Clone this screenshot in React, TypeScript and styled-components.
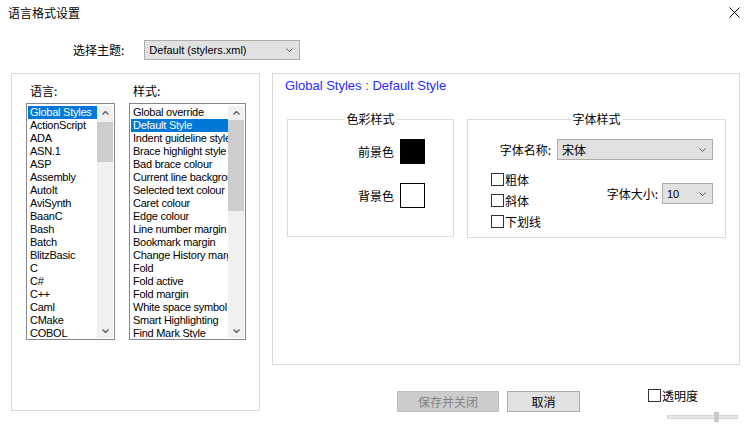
import React from 'react';
import styled, { createGlobalStyle } from 'styled-components';

const GlobalStyle = createGlobalStyle`
  html, body { margin: 0; padding: 0; background: #fff; }
  body {
    font-family: "Liberation Sans", "Noto Sans CJK SC", sans-serif;
    font-size: 12px;
    color: #000;
  }
  * { box-sizing: border-box; }
`;

const Window = styled.div`
  width: 750px;
  height: 427px;
  background: #fff;
  display: flex;
  flex-direction: column;
  overflow: hidden;
`;

const TitleBar = styled.div`
  height: 25px;
  display: flex;
  align-items: center;
  justify-content: space-between;
  padding: 0 10px 0 8px;
`;

const Title = styled.span`
  font-family: "Noto Sans CJK SC", sans-serif;
  font-size: 12px;
  line-height: 14px;
`;

const ThemeRow = styled.div`
  margin-top: 15px;
  height: 20px;
  display: flex;
  align-items: center;
  padding-left: 73px;
  gap: 20px;
`;

const CjkLabel = styled.span`
  font-family: "Noto Sans CJK SC", sans-serif;
  font-size: 12px;
  line-height: 16px;
  white-space: nowrap;
`;

const Select = styled.div<{ $w: number; $h: number }>`
  width: ${p => p.$w}px;
  height: ${p => p.$h}px;
  background: #e1e1e1;
  border: 1px solid #adadad;
  display: flex;
  align-items: center;
  justify-content: space-between;
  padding: 0 6px 0 4px;
  font-size: 11px;
  white-space: nowrap;
`;

const SelectText = styled.span<{ $cjk?: boolean }>`
  font-family: ${p => (p.$cjk ? '"Noto Sans CJK SC", sans-serif' : '"Liberation Sans", sans-serif')};
  font-size: ${p => (p.$cjk ? 12 : 11)}px;
`;

const Main = styled.div`
  margin-top: 13px;
  display: flex;
  padding-left: 11px;
  gap: 12px;
`;

const LeftPanel = styled.div`
  width: 249px;
  height: 338px;
  border: 1px solid #dadada;
  padding: 9px 0 0 14px;
  display: flex;
  gap: 14px;
`;

const ListColumn = styled.div`
  display: flex;
  flex-direction: column;
`;

const ListLabel = styled.div`
  height: 20px;
  padding-left: 4px;
  font-family: "Noto Sans CJK SC", sans-serif;
  font-size: 12px;
  line-height: 16px;
`;

const ListBox = styled.div<{ $w: number }>`
  width: ${p => p.$w}px;
  height: 237px;
  border: 1px solid #828790;
  padding: 2px 1px 1px 1px;
  display: flex;
  background: #fff;
`;

const Items = styled.div`
  flex: 1;
  min-width: 0;
  overflow: hidden;
`;

const Item = styled.div<{ $sel?: boolean }>`
  height: 13px;
  line-height: 13px;
  padding-left: 2px;
  font-size: 11px;
  letter-spacing: -0.25px;
  white-space: nowrap;
  overflow: hidden;
  background: ${p => (p.$sel ? '#0078d7' : 'transparent')};
  color: ${p => (p.$sel ? '#fff' : '#000')};
`;

const ScrollBar = styled.div`
  width: 16px;
  background: #f0f0f0;
  display: flex;
  flex-direction: column;
`;

const ScrollArrow = styled.div`
  height: 14px;
  display: flex;
  align-items: center;
  justify-content: center;
`;

const ScrollTrack = styled.div`
  flex: 1;
  display: flex;
  flex-direction: column;
`;

const Thumb = styled.div<{ $top: number; $h: number }>`
  margin-top: ${p => p.$top}px;
  height: ${p => p.$h}px;
  background: #cdcdcd;
`;

const RightColumn = styled.div`
  width: 468px;
  display: flex;
  flex-direction: column;
`;

const RightPanel = styled.div`
  height: 292px;
  border: 1px solid #dadada;
  display: flex;
  flex-direction: column;
`;

const Header = styled.div`
  margin-top: 3px;
  padding-left: 12px;
  height: 18px;
  line-height: 18px;
  font-size: 13px;
  color: #2a2aff;
`;

const Groups = styled.div`
  margin-top: 24px;
  padding-left: 14px;
  display: flex;
  gap: 13px;
`;

const GroupBox = styled.div<{ $w: number; $h: number }>`
  position: relative;
  width: ${p => p.$w}px;
  height: ${p => p.$h}px;
  border: 1px solid #dcdcdc;
  padding-top: 19px;
`;

const Legend = styled.span`
  position: absolute;
  top: -8px;
  left: 50%;
  transform: translateX(-50%);
  background: #fff;
  padding: 0 2px;
  font-family: "Noto Sans CJK SC", sans-serif;
  font-size: 12px;
  line-height: 14px;
  white-space: nowrap;
`;

const ColorRows = styled.div`
  display: flex;
  flex-direction: column;
  gap: 19px;
  padding-right: 28px;
`;

const ColorRow = styled.div`
  display: flex;
  justify-content: flex-end;
  align-items: center;
  gap: 6px;
`;

const Swatch = styled.div<{ $c: string }>`
  width: 25px;
  height: 25px;
  background: ${p => p.$c};
  border: 1px solid #000;
`;

const FontRow = styled.div`
  display: flex;
  justify-content: flex-end;
  align-items: center;
  gap: 6px;
  padding-right: 12px;
`;

const FontRow2 = styled.div`
  margin-top: 13px;
  display: flex;
  justify-content: space-between;
  padding: 0 12px 0 23px;
`;

const Checks = styled.div`
  display: flex;
  flex-direction: column;
  gap: 8px;
`;

const CheckRow = styled.label`
  display: flex;
  align-items: center;
  gap: 1px;
  height: 13px;
  font-family: "Noto Sans CJK SC", sans-serif;
  font-size: 12px;
  white-space: nowrap;
`;

const CheckBox = styled.span`
  display: inline-block;
  width: 13px;
  height: 13px;
  border: 1px solid #333;
  background: #fff;
`;

const SizeGroup = styled.div`
  margin-top: 10px;
  display: flex;
  align-items: center;
  gap: 4px;
  align-self: flex-start;
`;

const Bottom = styled.div`
  padding-top: 26px;
  display: flex;
`;

const Buttons = styled.div`
  margin-left: 125px;
  display: flex;
  gap: 8px;
`;

const Button = styled.div<{ $w: number; $disabled?: boolean }>`
  width: ${p => p.$w}px;
  height: 21px;
  display: flex;
  align-items: center;
  justify-content: center;
  font-family: "Noto Sans CJK SC", sans-serif;
  font-size: 12px;
  background: ${p => (p.$disabled ? '#cccccc' : '#e1e1e1')};
  border: 1px solid ${p => (p.$disabled ? '#bfbfbf' : '#adadad')};
  color: ${p => (p.$disabled ? '#838383' : '#000')};
`;

const Transparency = styled.div`
  margin-left: 68px;
  margin-top: -2px;
  display: flex;
  flex-direction: column;
`;

const Slider = styled.div`
  position: relative;
  margin: 10px 0 0 19px;
  width: 71px;
  height: 10px;
  display: flex;
  align-items: center;
`;

const SliderTrack = styled.div`
  width: 100%;
  height: 4px;
  background: #e7e7e7;
  border: 1px solid #d6d6d6;
`;

const SliderThumb = styled.div`
  position: absolute;
  left: 47px;
  top: 0;
  width: 5px;
  height: 10px;
  background: #c8c8c8;
`;

const Chevron = ({ up }: { up?: boolean }) => (
  <svg width="7" height="4" viewBox="0 0 7 4">
    <polyline
      points={up ? '0.5,3.5 3.5,0.5 6.5,3.5' : '0.5,0.5 3.5,3.5 6.5,0.5'}
      fill="none"
      stroke="#606060"
      strokeWidth="1.4"
    />
  </svg>
);

const DropChevron = () => (
  <svg width="7" height="4" viewBox="0 0 7 4">
    <polyline points="0.5,0.5 3.5,3.5 6.5,0.5" fill="none" stroke="#555" strokeWidth="1" />
  </svg>
);

const CloseIcon = () => (
  <svg width="11" height="11" viewBox="0 0 11 11">
    <path d="M0.5 0.5 L10.5 10.5 M10.5 0.5 L0.5 10.5" stroke="#000" strokeWidth="1" fill="none" />
  </svg>
);

const languages = [
  'Global Styles', 'ActionScript', 'ADA', 'ASN.1', 'ASP', 'Assembly', 'AutoIt', 'AviSynth',
  'BaanC', 'Bash', 'Batch', 'BlitzBasic', 'C', 'C#', 'C++', 'Caml', 'CMake', 'COBOL',
];

const styles = [
  'Global override', 'Default Style', 'Indent guideline style', 'Brace highlight style',
  'Bad brace colour', 'Current line background colour', 'Selected text colour', 'Caret colour',
  'Edge colour', 'Line number margin', 'Bookmark margin', 'Change History margin', 'Fold',
  'Fold active', 'Fold margin', 'White space symbol', 'Smart Highlighting', 'Find Mark Style',
];

const List = ({ items, sel, w, thumbTop, thumbH }: { items: string[]; sel: number; w: number; thumbTop: number; thumbH: number }) => (
  <ListBox $w={w}>
    <Items>
      {items.map((it, i) => (
        <Item key={it} $sel={i === sel}>{it}</Item>
      ))}
    </Items>
    <ScrollBar>
      <ScrollArrow><Chevron up /></ScrollArrow>
      <ScrollTrack>
        <Thumb $top={thumbTop} $h={thumbH} />
      </ScrollTrack>
      <ScrollArrow><Chevron /></ScrollArrow>
    </ScrollBar>
  </ListBox>
);

export default function App() {
  return (
    <>
      <GlobalStyle />
      <Window>
        <TitleBar>
          <Title>语言格式设置</Title>
          <CloseIcon />
        </TitleBar>
        <ThemeRow>
          <CjkLabel>选择主题:</CjkLabel>
          <Select $w={156} $h={20}>
            <SelectText>Default (stylers.xml)</SelectText>
            <DropChevron />
          </Select>
        </ThemeRow>
        <Main>
          <LeftPanel>
            <ListColumn>
              <ListLabel>语言:</ListLabel>
              <List items={languages} sel={0} w={89} thumbTop={2} thumbH={40} />
            </ListColumn>
            <ListColumn>
              <ListLabel>样式:</ListLabel>
              <List items={styles} sel={1} w={117} thumbTop={0} thumbH={91} />
            </ListColumn>
          </LeftPanel>
          <RightColumn>
            <RightPanel>
              <Header>Global Styles : Default Style</Header>
              <Groups>
                <GroupBox $w={167} $h={118}>
                  <Legend>色彩样式</Legend>
                  <ColorRows>
                    <ColorRow>
                      <CjkLabel>前景色</CjkLabel>
                      <Swatch $c="#000" />
                    </ColorRow>
                    <ColorRow>
                      <CjkLabel>背景色</CjkLabel>
                      <Swatch $c="#fff" />
                    </ColorRow>
                  </ColorRows>
                </GroupBox>
                <GroupBox $w={259} $h={119}>
                  <Legend>字体样式</Legend>
                  <FontRow>
                    <CjkLabel>字体名称:</CjkLabel>
                    <Select $w={156} $h={21}>
                      <SelectText $cjk>宋体</SelectText>
                      <DropChevron />
                    </Select>
                  </FontRow>
                  <FontRow2>
                    <Checks>
                      <CheckRow><CheckBox />粗体</CheckRow>
                      <CheckRow><CheckBox />斜体</CheckRow>
                      <CheckRow><CheckBox />下划线</CheckRow>
                    </Checks>
                    <SizeGroup>
                      <CjkLabel>字体大小:</CjkLabel>
                      <Select $w={51} $h={21}>
                        <SelectText>10</SelectText>
                        <DropChevron />
                      </Select>
                    </SizeGroup>
                  </FontRow2>
                </GroupBox>
              </Groups>
            </RightPanel>
            <Bottom>
              <Buttons>
                <Button $w={102} $disabled>保存并关闭</Button>
                <Button $w={73}>取消</Button>
              </Buttons>
              <Transparency>
                <CheckRow><CheckBox />透明度</CheckRow>
                <Slider>
                  <SliderTrack />
                  <SliderThumb />
                </Slider>
              </Transparency>
            </Bottom>
          </RightColumn>
        </Main>
      </Window>
    </>
  );
}
